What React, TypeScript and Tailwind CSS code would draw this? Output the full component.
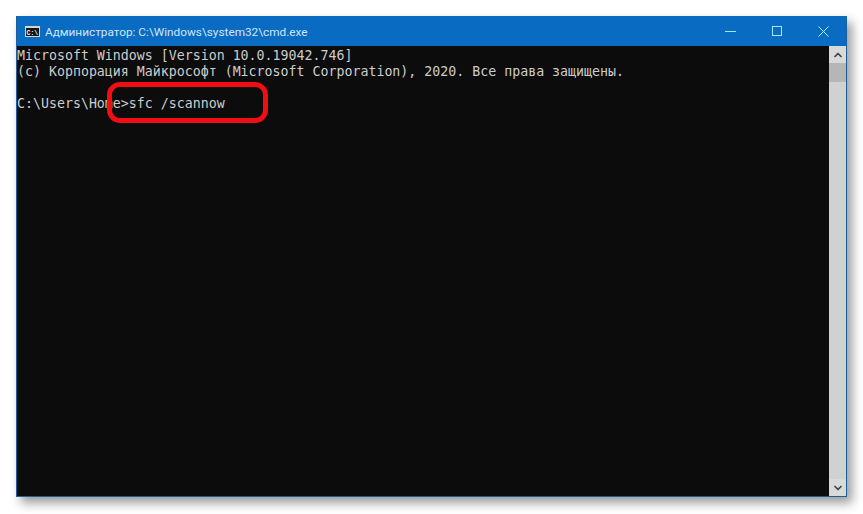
import React from 'react';
import { ChevronUp, ChevronDown } from 'lucide-react';

const LINES = [
  'Microsoft Windows [Version 10.0.19042.746]',
  '(c) Корпорация Майкрософт (Microsoft Corporation), 2020. Все права защищены.',
  '',
  'C:\\Users\\Home>sfc /scannow',
];

function CmdIcon() {
  return (
    <svg width="15" height="11" viewBox="0 0 15 11" className="shrink-0">
      <rect x="0" y="0" width="15" height="11" fill="#d4d4d4" />
      <rect x="1" y="2" width="13" height="8" fill="#161616" />
      <text x="1.5" y="8.5" fontSize="6.5" fontWeight="700" fill="#f0f0f0" fontFamily="'Liberation Mono', monospace">C:\</text>
    </svg>
  );
}

function WindowButtons() {
  return (
    <div className="flex items-center h-full">
      <div className="w-[46px] flex justify-center">
        <div className="w-[11px] h-px bg-[#a5e8fb]" />
      </div>
      <div className="w-[46px] flex justify-center ml-[1px]">
        <div className="w-[10px] h-[10px] border border-[#a5e8fb]" />
      </div>
      <div className="w-[46px] flex justify-center">
        <svg width="11" height="11" viewBox="0 0 11 11" stroke="#b9eefc" strokeWidth="1">
          <path d="M0.5 0.5 10.5 10.5M10.5 0.5 0.5 10.5" />
        </svg>
      </div>
    </div>
  );
}

export default function App() {
  return (
    <div className="w-[863px] h-[514px] bg-white overflow-hidden pt-4 pl-4">
      <div className="relative w-[831px] h-[481px] flex flex-col border-r border-b border-l border-[#1c5f9e] shadow-[5px_6px_10px_rgba(0,0,0,0.4)]">
        {/* Title bar */}
        <div className="h-[30px] shrink-0 bg-[#0a6bc2] flex items-center justify-between pl-[8px]">
          <div className="flex items-center gap-[5px]">
            <CmdIcon />
            <span className="text-[11.8px] leading-[18px] pt-[1px] text-[#cfe6f7] font-['Roboto',sans-serif] whitespace-nowrap">
              Администратор: C:\Windows\system32\cmd.exe
            </span>
          </div>
          <WindowButtons />
        </div>

        {/* Console + scrollbar */}
        <div className="flex-1 flex min-h-0">
          <div className="flex-1 bg-[#0c0c0c] text-[#cccccc] font-['DejaVu_Sans_Mono',monospace] text-[13.28px] leading-4 pt-[2px] whitespace-pre">
            {LINES.map((line, i) => (
              <div key={i} className="h-4">{line}</div>
            ))}
          </div>
          <div className="w-[17px] shrink-0 bg-[#d0d2d2] flex flex-col">
            <div className="h-[17px] flex items-center justify-center bg-[#d8dada]">
              <ChevronUp size={12} strokeWidth={3.5} color="#444" />
            </div>
            <div className="h-[19px] bg-[#b6b6b6]" />
            <div className="flex-1" />
            <div className="h-[17px] flex items-center justify-center bg-[#d8dada]">
              <ChevronDown size={12} strokeWidth={3.5} color="#444" />
            </div>
          </div>
        </div>

        {/* Red highlight around the command */}
        <div className="absolute left-[90px] top-[66px] w-[161px] h-[41px] border-[5px] border-[#f00d13] rounded-[13px]" />
      </div>
    </div>
  );
}
